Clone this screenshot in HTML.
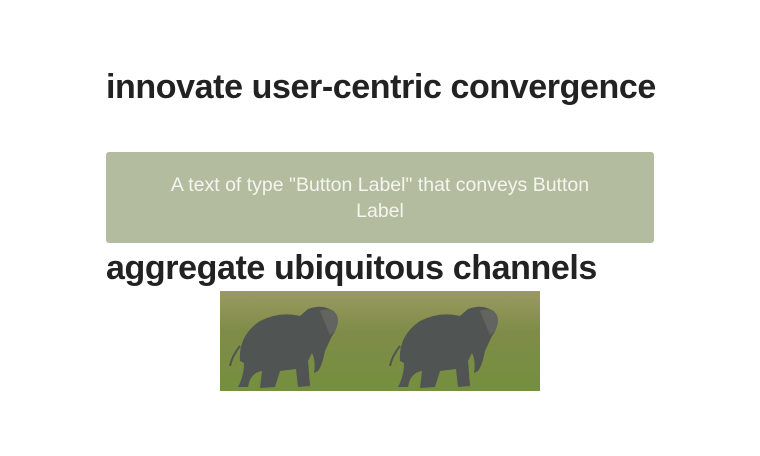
<!DOCTYPE html>
<html><head><style>
body{margin:0;width:760px;height:456px;background:#fff;font-family:"Liberation Sans",sans-serif;position:relative;overflow:hidden}
h1{position:absolute;left:106px;margin:0;font-size:34px;line-height:40px;font-weight:bold;color:#222;white-space:nowrap;letter-spacing:-0.4px}
.btn{position:absolute;left:106px;top:152px;width:548px;height:91px;background:#b4bc9f;border-radius:3px}
.btn span{position:absolute;left:54px;width:440px;top:20px;color:#f4f5ee;font-size:19.5px;line-height:26px;text-align:center}
</style></head><body>
<h1 style="top:67px">innovate user-centric convergence</h1>
<div class="btn"><span>A text of type "Button Label" that conveys Button Label</span></div>
<h1 style="top:248px">aggregate ubiquitous channels</h1>
<svg style="position:absolute;left:220px;top:291px" width="320" height="100" viewBox="0 0 320 100">
<defs>
<linearGradient id="g" x1="0" y1="0" x2="0" y2="1"><stop offset="0" stop-color="#9a9a62"/><stop offset="0.4" stop-color="#7f8c48"/><stop offset="1" stop-color="#748f3e"/></linearGradient>
<g id="e">
<rect width="160" height="100" fill="url(#g)"/>
<path d="M20 70 Q18 45 40 30 Q60 20 80 25 L88 18 Q105 12 115 22 Q120 35 112 45 L105 60 Q102 75 98 80 L94 82 Q96 70 92 62 L88 70 L90 95 L78 96 L76 78 L60 80 L55 96 L40 97 L42 80 Q30 82 28 96 L18 96 Q24 85 24 72 Z" fill="#505452"/>
<path d="M20 55 Q12 65 10 75" stroke="#505452" stroke-width="2" fill="none"/>
<path d="M100 20 Q115 14 118 28 Q118 40 110 44" fill="#62655f"/>
</g></defs>
<use href="#e"/><use href="#e" x="160"/>
</svg>
</body></html>
